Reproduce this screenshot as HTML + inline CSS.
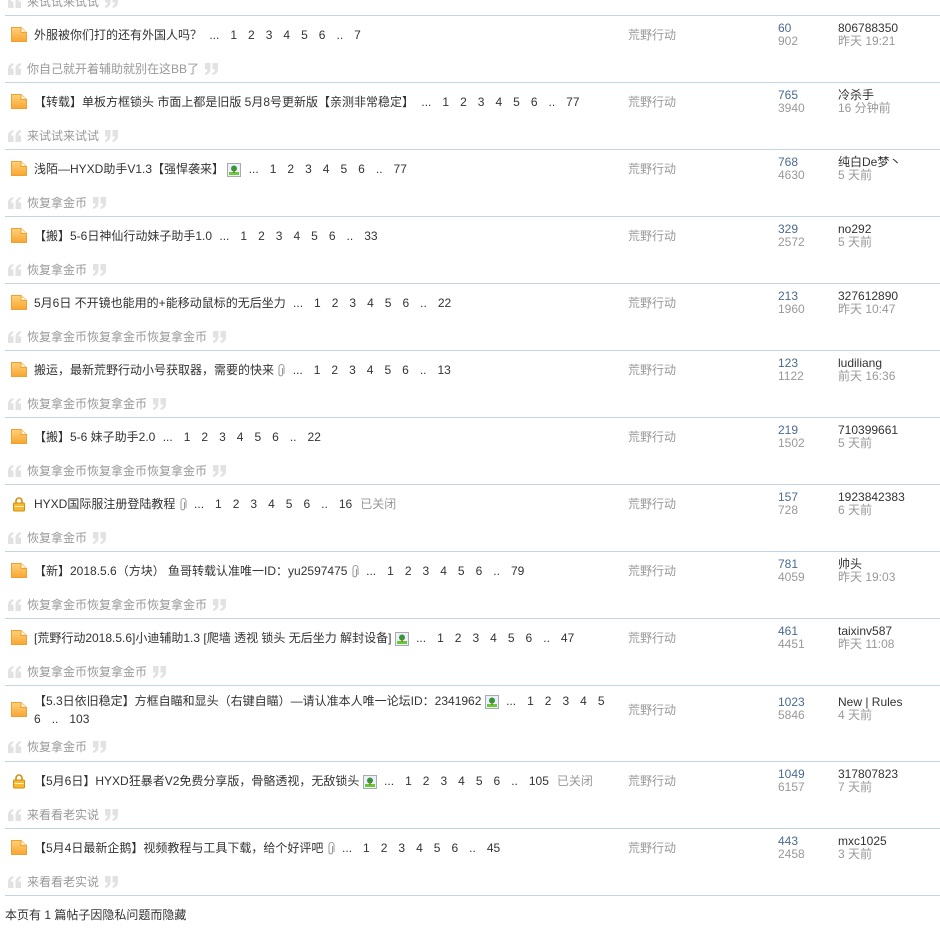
<!DOCTYPE html>
<html><head><meta charset="utf-8">
<style>
*{margin:0;padding:0;box-sizing:border-box}
body{width:940px;height:928px;background:#fff;font-family:"Liberation Sans","Noto Sans CJK SC",sans-serif;font-size:12px;color:#333;position:relative;overflow:hidden}
.line{position:absolute;left:5px;width:935px;height:1px;background:#c2d5e3}
.r{position:absolute;left:0;width:940px}
.ic{position:absolute;left:10px}
.t{position:absolute;left:34px;width:580px;line-height:18px;white-space:nowrap}
.t2{white-space:normal}
.pg span{margin-left:11px}
.pg span.d{margin-left:4px}
.q{position:absolute;left:8px;color:#999;line-height:16px;white-space:nowrap}
.q svg{vertical-align:-2px}
.q .ql{margin-right:5px}
.q .qr{margin-left:5px}
.f{position:absolute;left:628px;color:#999;line-height:16px}
.n1{position:absolute;left:778px;color:#4a6b8f;line-height:13px}
.n2{position:absolute;left:778px;color:#999;line-height:13px}
.a{position:absolute;left:838px;color:#333;line-height:13px}
.tm{position:absolute;left:838px;color:#999;line-height:13px}
.cl{color:#999;margin-left:8px}
svg{vertical-align:middle}
</style></head><body>
<svg width="0" height="0" style="position:absolute">
<defs>
<linearGradient id="og" x1="0" y1="0" x2="0" y2="1"><stop offset="0" stop-color="#ffd27a"/><stop offset="1" stop-color="#f8a531"/></linearGradient>
<symbol id="doc" viewBox="0 0 18 17"><path d="M1.5 1.5 H11 L16.5 6.5 V15.5 H1.5 Z" fill="url(#og)" stroke="#f0a030"/><path d="M11 1.5 V6.5 H16.5" fill="#fff3d6" stroke="#f0a030"/></symbol>
<symbol id="lock" viewBox="0 0 14 16"><path d="M4 7 V5 A3 3 0 0 1 10 5 V7" fill="none" stroke="#d09010" stroke-width="1.6"/><rect x="1.5" y="7" width="11" height="8" rx="1" fill="#f8b830" stroke="#d09010"/><rect x="2.5" y="10" width="9" height="1" fill="#fff3c0"/></symbol>
<symbol id="img" viewBox="0 0 14 14"><rect x="0.5" y="0.5" width="13" height="13" fill="#eef" stroke="#aaa"/><rect x="2" y="9" width="10" height="3" fill="#6c3"/><circle cx="7" cy="5.5" r="3" fill="#393"/><rect x="6.3" y="7" width="1.4" height="3" fill="#963"/></symbol>
<symbol id="clip" viewBox="0 0 8 14"><path d="M5.5 4 V10.5 A1.8 1.8 0 0 1 2 10.5 V3 A2.5 2.5 0 0 1 7 3 V10" fill="none" stroke="#999" stroke-width="1"/></symbol>
<symbol id="qo" viewBox="0 0 14 12"><path d="M0 12 V6 Q0 1 5.5 0 L5.5 2 Q3 3 3 5.5 H5.5 V12 Z M7.5 12 V6 Q7.5 1 13 0 L13 2 Q10.5 3 10.5 5.5 H13 V12 Z" fill="#e2e2e2"/></symbol>
<symbol id="qc" viewBox="0 0 14 12"><g transform="rotate(180 7 6)"><path d="M0 12 V6 Q0 1 5.5 0 L5.5 2 Q3 3 3 5.5 H5.5 V12 Z M7.5 12 V6 Q7.5 1 13 0 L13 2 Q10.5 3 10.5 5.5 H13 V12 Z" fill="#e2e2e2"/></g></symbol>
</defs></svg>

<div class="q" style="top:-6px"><svg class="ql" width="14" height="12"><use href="#qo"/></svg>来试试来试试<svg class="qr" width="14" height="12"><use href="#qc"/></svg></div>
<div class="line" style="top:15px"></div>

<div class="r" style="top:16px">
<svg class="ic" style="top:10px" width="18" height="17"><use href="#doc"/></svg>
<div class="t" style="top:10px">外服被你们打的还有外国人吗？ <span class="pg"><span class="d">...</span><span>1</span><span>2</span><span>3</span><span>4</span><span>5</span><span>6</span><span class="d" style="margin-left:11px">..</span><span>7</span></span></div>
<div class="f" style="top:11px">荒野行动</div>
<div class="n1" style="top:6px">60</div><div class="n2" style="top:19px">902</div>
<div class="a" style="top:6px">806788350</div><div class="tm" style="top:19px">昨天 19:21</div>
<div class="q" style="top:45px"><svg class="ql" width="14" height="12"><use href="#qo"/></svg>你自己就开着辅助就别在这BB了<svg class="qr" width="14" height="12"><use href="#qc"/></svg></div>
</div>
<div class="line" style="top:82px"></div>

<div class="r" style="top:83px">
<svg class="ic" style="top:10px" width="18" height="17"><use href="#doc"/></svg>
<div class="t" style="top:10px">【转载】单板方框锁头 市面上都是旧版 5月8号更新版【亲测非常稳定】 <span class="pg"><span class="d">...</span><span>1</span><span>2</span><span>3</span><span>4</span><span>5</span><span>6</span><span class="d" style="margin-left:11px">..</span><span>77</span></span></div>
<div class="f" style="top:11px">荒野行动</div>
<div class="n1" style="top:6px">765</div><div class="n2" style="top:19px">3940</div>
<div class="a" style="top:6px">冷杀手</div><div class="tm" style="top:19px">16 分钟前</div>
<div class="q" style="top:45px"><svg class="ql" width="14" height="12"><use href="#qo"/></svg>来试试来试试<svg class="qr" width="14" height="12"><use href="#qc"/></svg></div>
</div>
<div class="line" style="top:149px"></div>

<div class="r" style="top:150px">
<svg class="ic" style="top:10px" width="18" height="17"><use href="#doc"/></svg>
<div class="t" style="top:10px">浅陌—HYXD助手V1.3【强悍袭来】 <svg width="14" height="14"><use href="#img"/></svg> <span class="pg"><span class="d">...</span><span>1</span><span>2</span><span>3</span><span>4</span><span>5</span><span>6</span><span class="d" style="margin-left:11px">..</span><span>77</span></span></div>
<div class="f" style="top:11px">荒野行动</div>
<div class="n1" style="top:6px">768</div><div class="n2" style="top:19px">4630</div>
<div class="a" style="top:6px">纯白De梦丶</div><div class="tm" style="top:19px">5 天前</div>
<div class="q" style="top:45px"><svg class="ql" width="14" height="12"><use href="#qo"/></svg>恢复拿金币<svg class="qr" width="14" height="12"><use href="#qc"/></svg></div>
</div>
<div class="line" style="top:216px"></div>

<div class="r" style="top:217px">
<svg class="ic" style="top:10px" width="18" height="17"><use href="#doc"/></svg>
<div class="t" style="top:10px">【搬】5-6日神仙行动妹子助手1.0 <span class="pg"><span class="d">...</span><span>1</span><span>2</span><span>3</span><span>4</span><span>5</span><span>6</span><span class="d" style="margin-left:11px">..</span><span>33</span></span></div>
<div class="f" style="top:11px">荒野行动</div>
<div class="n1" style="top:6px">329</div><div class="n2" style="top:19px">2572</div>
<div class="a" style="top:6px">no292</div><div class="tm" style="top:19px">5 天前</div>
<div class="q" style="top:45px"><svg class="ql" width="14" height="12"><use href="#qo"/></svg>恢复拿金币<svg class="qr" width="14" height="12"><use href="#qc"/></svg></div>
</div>
<div class="line" style="top:283px"></div>

<div class="r" style="top:284px">
<svg class="ic" style="top:10px" width="18" height="17"><use href="#doc"/></svg>
<div class="t" style="top:10px">5月6日 不开镜也能用的+能移动鼠标的无后坐力 <span class="pg"><span class="d">...</span><span>1</span><span>2</span><span>3</span><span>4</span><span>5</span><span>6</span><span class="d" style="margin-left:11px">..</span><span>22</span></span></div>
<div class="f" style="top:11px">荒野行动</div>
<div class="n1" style="top:6px">213</div><div class="n2" style="top:19px">1960</div>
<div class="a" style="top:6px">327612890</div><div class="tm" style="top:19px">昨天 10:47</div>
<div class="q" style="top:45px"><svg class="ql" width="14" height="12"><use href="#qo"/></svg>恢复拿金币恢复拿金币恢复拿金币<svg class="qr" width="14" height="12"><use href="#qc"/></svg></div>
</div>
<div class="line" style="top:350px"></div>

<div class="r" style="top:351px">
<svg class="ic" style="top:10px" width="18" height="17"><use href="#doc"/></svg>
<div class="t" style="top:10px">搬运，最新荒野行动小号获取器，需要的快来 <svg width="8" height="14"><use href="#clip"/></svg> <span class="pg"><span class="d">...</span><span>1</span><span>2</span><span>3</span><span>4</span><span>5</span><span>6</span><span class="d" style="margin-left:11px">..</span><span>13</span></span></div>
<div class="f" style="top:11px">荒野行动</div>
<div class="n1" style="top:6px">123</div><div class="n2" style="top:19px">1122</div>
<div class="a" style="top:6px">ludiliang</div><div class="tm" style="top:19px">前天 16:36</div>
<div class="q" style="top:45px"><svg class="ql" width="14" height="12"><use href="#qo"/></svg>恢复拿金币恢复拿金币<svg class="qr" width="14" height="12"><use href="#qc"/></svg></div>
</div>
<div class="line" style="top:417px"></div>

<div class="r" style="top:418px">
<svg class="ic" style="top:10px" width="18" height="17"><use href="#doc"/></svg>
<div class="t" style="top:10px">【搬】5-6 妹子助手2.0 <span class="pg"><span class="d">...</span><span>1</span><span>2</span><span>3</span><span>4</span><span>5</span><span>6</span><span class="d" style="margin-left:11px">..</span><span>22</span></span></div>
<div class="f" style="top:11px">荒野行动</div>
<div class="n1" style="top:6px">219</div><div class="n2" style="top:19px">1502</div>
<div class="a" style="top:6px">710399661</div><div class="tm" style="top:19px">5 天前</div>
<div class="q" style="top:45px"><svg class="ql" width="14" height="12"><use href="#qo"/></svg>恢复拿金币恢复拿金币恢复拿金币<svg class="qr" width="14" height="12"><use href="#qc"/></svg></div>
</div>
<div class="line" style="top:484px"></div>

<div class="r" style="top:485px">
<svg class="ic" style="top:11px;left:12px" width="14" height="16"><use href="#lock"/></svg>
<div class="t" style="top:10px">HYXD国际服注册登陆教程 <svg width="8" height="14"><use href="#clip"/></svg> <span class="pg"><span class="d">...</span><span>1</span><span>2</span><span>3</span><span>4</span><span>5</span><span>6</span><span class="d" style="margin-left:11px">..</span><span>16</span></span><span class="cl">已关闭</span></div>
<div class="f" style="top:11px">荒野行动</div>
<div class="n1" style="top:6px">157</div><div class="n2" style="top:19px">728</div>
<div class="a" style="top:6px">1923842383</div><div class="tm" style="top:19px">6 天前</div>
<div class="q" style="top:45px"><svg class="ql" width="14" height="12"><use href="#qo"/></svg>恢复拿金币<svg class="qr" width="14" height="12"><use href="#qc"/></svg></div>
</div>
<div class="line" style="top:551px"></div>

<div class="r" style="top:552px">
<svg class="ic" style="top:10px" width="18" height="17"><use href="#doc"/></svg>
<div class="t" style="top:10px">【新】2018.5.6（方块） 鱼哥转载认准唯一ID：yu2597475 <svg width="8" height="14"><use href="#clip"/></svg> <span class="pg"><span class="d">...</span><span>1</span><span>2</span><span>3</span><span>4</span><span>5</span><span>6</span><span class="d" style="margin-left:11px">..</span><span>79</span></span></div>
<div class="f" style="top:11px">荒野行动</div>
<div class="n1" style="top:6px">781</div><div class="n2" style="top:19px">4059</div>
<div class="a" style="top:6px">帅头</div><div class="tm" style="top:19px">昨天 19:03</div>
<div class="q" style="top:45px"><svg class="ql" width="14" height="12"><use href="#qo"/></svg>恢复拿金币恢复拿金币恢复拿金币<svg class="qr" width="14" height="12"><use href="#qc"/></svg></div>
</div>
<div class="line" style="top:618px"></div>

<div class="r" style="top:619px">
<svg class="ic" style="top:10px" width="18" height="17"><use href="#doc"/></svg>
<div class="t" style="top:10px">[荒野行动2018.5.6]小迪辅助1.3 [爬墙 透视 锁头 无后坐力 解封设备] <svg width="14" height="14"><use href="#img"/></svg> <span class="pg"><span class="d">...</span><span>1</span><span>2</span><span>3</span><span>4</span><span>5</span><span>6</span><span class="d" style="margin-left:11px">..</span><span>47</span></span></div>
<div class="f" style="top:11px">荒野行动</div>
<div class="n1" style="top:6px">461</div><div class="n2" style="top:19px">4451</div>
<div class="a" style="top:6px">taixinv587</div><div class="tm" style="top:19px">昨天 11:08</div>
<div class="q" style="top:45px"><svg class="ql" width="14" height="12"><use href="#qo"/></svg>恢复拿金币恢复拿金币<svg class="qr" width="14" height="12"><use href="#qc"/></svg></div>
</div>
<div class="line" style="top:685px"></div>

<div class="r" style="top:686px">
<svg class="ic" style="top:15px" width="18" height="17"><use href="#doc"/></svg>
<div class="t t2" style="top:6px;width:580px">【5.3日依旧稳定】方框自瞄和显头（右键自瞄）—请认准本人唯一论坛ID：2341962 <svg width="14" height="14"><use href="#img"/></svg> <span class="pg"><span class="d">...</span><span>1</span><span>2</span><span>3</span><span>4</span><span>5</span> <span style="margin-left:0">6</span><span class="d" style="margin-left:11px">..</span><span>103</span></span></div>
<div class="f" style="top:16px">荒野行动</div>
<div class="n1" style="top:10px">1023</div><div class="n2" style="top:23px">5846</div>
<div class="a" style="top:10px">New | Rules</div><div class="tm" style="top:23px">4 天前</div>
<div class="q" style="top:53px"><svg class="ql" width="14" height="12"><use href="#qo"/></svg>恢复拿金币<svg class="qr" width="14" height="12"><use href="#qc"/></svg></div>
</div>
<div class="line" style="top:761px"></div>

<div class="r" style="top:762px">
<svg class="ic" style="top:11px;left:12px" width="14" height="16"><use href="#lock"/></svg>
<div class="t" style="top:10px">【5月6日】HYXD狂暴者V2免费分享版，骨骼透视，无敌锁头 <svg width="14" height="14"><use href="#img"/></svg> <span class="pg"><span class="d">...</span><span>1</span><span>2</span><span>3</span><span>4</span><span>5</span><span>6</span><span class="d" style="margin-left:11px">..</span><span>105</span></span><span class="cl">已关闭</span></div>
<div class="f" style="top:11px">荒野行动</div>
<div class="n1" style="top:6px">1049</div><div class="n2" style="top:19px">6157</div>
<div class="a" style="top:6px">317807823</div><div class="tm" style="top:19px">7 天前</div>
<div class="q" style="top:45px"><svg class="ql" width="14" height="12"><use href="#qo"/></svg>来看看老实说<svg class="qr" width="14" height="12"><use href="#qc"/></svg></div>
</div>
<div class="line" style="top:828px"></div>

<div class="r" style="top:829px">
<svg class="ic" style="top:10px" width="18" height="17"><use href="#doc"/></svg>
<div class="t" style="top:10px">【5月4日最新企鹅】视频教程与工具下载，给个好评吧 <svg width="8" height="14"><use href="#clip"/></svg> <span class="pg"><span class="d">...</span><span>1</span><span>2</span><span>3</span><span>4</span><span>5</span><span>6</span><span class="d" style="margin-left:11px">..</span><span>45</span></span></div>
<div class="f" style="top:11px">荒野行动</div>
<div class="n1" style="top:6px">443</div><div class="n2" style="top:19px">2458</div>
<div class="a" style="top:6px">mxc1025</div><div class="tm" style="top:19px">3 天前</div>
<div class="q" style="top:45px"><svg class="ql" width="14" height="12"><use href="#qo"/></svg>来看看老实说<svg class="qr" width="14" height="12"><use href="#qc"/></svg></div>
</div>
<div class="line" style="top:895px"></div>

<div style="position:absolute;left:5px;top:907px;line-height:16px;color:#333">本页有 1 篇帖子因隐私问题而隐藏</div>
</body></html>
